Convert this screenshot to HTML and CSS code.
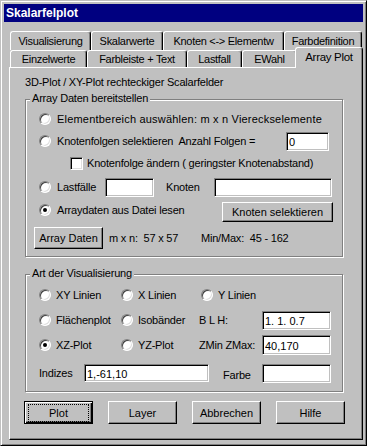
FILE: index.html
```html
<!DOCTYPE html>
<html lang="de">
  <head>
    <meta charset="UTF-8" />
    <title>Skalarfelplot</title>
    <link rel="stylesheet" href="styles.css">
  </head>
  <body>
    <div class="window">
      <div class="titlebar">Skalarfelplot</div>
      <div class="dialog">
        <div class="tabs">
          <div class="tabrow back">
            <div class="tab w-vis">Visualisierung</div>
            <div class="tab w-skal">Skalarwerte</div>
            <div class="tab w-knot">Knoten &lt;-&gt; Elementw</div>
            <div class="tab w-farb">Farbdefinition</div>
          </div>
          <div class="tabrow front">
            <div class="tab w-einz">Einzelwerte</div>
            <div class="tab w-leiste">Farbleiste + Text</div>
            <div class="tab w-last">Lastfall</div>
            <div class="tab w-ewahl">EWahl</div>
            <div class="tab active">Array Plot</div>
          </div>
        </div>

        <div class="panel">
          <p class="intro">3D-Plot / XY-Plot rechteckiger Scalarfelder</p>

          <div class="group g1">
            <span class="legend">Array Daten bereitstellen</span>
            <div class="row">
              <span class="radio"></span><span class="wide">Elementbereich auswählen: m x n Viereckselemente</span>
            </div>
            <div class="row">
              <span class="radio"></span><span>Knotenfolgen selektieren&nbsp; Anzahl Folgen =</span>
              <input class="field f-folgen" type="text" value="0">
            </div>
            <div class="row">
              <span class="check"></span><span>Knotenfolge ändern ( geringster Knotenabstand)</span>
            </div>
            <div class="row r4">
              <span class="radio"></span><span class="lbl-last">Lastfälle</span>
              <input class="field f-last" type="text" value="">
              <span class="lbl-knoten">Knoten</span>
              <input class="field f-knoten" type="text" value="">
            </div>
            <div class="row r5">
              <span class="radio on"></span><span>Arraydaten aus Datei lesen</span>
              <button class="btn b-knoten">Knoten selektieren</button>
            </div>
            <div class="row r6">
              <button class="btn b-array">Array Daten</button>
              <span class="lbl-mxn">m x n:&nbsp; 57 x 57</span>
              <span>Min/Max:&nbsp; 45 - 162</span>
            </div>
          </div>

          <div class="group g2">
            <span class="legend">Art der Visualisierung</span>
            <div class="grid">
              <div class="opt"><span class="radio"></span>XY Linien</div>
              <div class="opt"><span class="radio"></span>X Linien</div>
              <div class="opt shift"><span class="radio"></span>Y Linien</div>
              <div></div>

              <div class="opt"><span class="radio"></span>Flächenplot</div>
              <div class="opt"><span class="radio"></span>Isobänder</div>
              <div class="opt">B L H:</div>
              <input class="field f-blh" type="text" value="1. 1. 0.7">

              <div class="opt"><span class="radio on"></span>XZ-Plot</div>
              <div class="opt"><span class="radio"></span>YZ-Plot</div>
              <div class="opt">ZMin ZMax:</div>
              <input class="field f-z" type="text" value="40,170">
            </div>
            <div class="row r-ind">
              <span class="lbl-ind">Indizes</span>
              <input class="field f-ind" type="text" value="1,-61,10">
              <span class="lbl-farbe">Farbe</span>
              <input class="field f-farbe" type="text" value="">
            </div>
          </div>

          <div class="buttons">
            <button class="btn default"><span>Plot</span></button>
            <button class="btn">Layer</button>
            <button class="btn">Abbrechen</button>
            <button class="btn">Hilfe</button>
          </div>
        </div>
      </div>
    </div>
  </body>
</html>
```

FILE: styles.css
```css
* {
  margin: 0;
  padding: 0;
  box-sizing: border-box;
}

html, body {
  background: #c0c0c0;
}

body {
  font-family: "Liberation Sans", Arial, sans-serif;
  font-size: 11px;
  letter-spacing: -0.2px;
  color: #000;
}

.window {
  width: 367px;
  height: 446px;
  border: 1px solid;
  border-color: #c0c0c0 #000 #000 #c0c0c0;
  box-shadow: inset 1px 1px #fff, inset -1px -1px #808080;
  padding: 3px;
}

.titlebar {
  height: 18px;
  line-height: 18px;
  background: #000080;
  color: #fff;
  font-size: 12px;
  font-weight: bold;
  letter-spacing: 0;
  padding-left: 2px;
}

.dialog {
  padding: 9px 0 0 5px;
}

/* tabs */
.tabs {
  margin-left: 1px;
}

.tabrow {
  display: flex;
}

.tabrow.back {
  height: 19px;
}

.tabrow.front {
  height: 17px;
}

.tab {
  height: 100%;
  border: 1px solid;
  border-bottom: none;
  border-color: #fff #000 #000 #fff;
  box-shadow: inset -1px 0 #808080;
  border-radius: 3px 3px 0 0;
  display: flex;
  align-items: center;
  justify-content: center;
  letter-spacing: -0.3px;
  background: #c0c0c0;
}

.w-vis { width: 81px; }
.w-skal { width: 72px; }
.w-knot { width: 121px; }
.w-farb { width: 78px; }
.w-einz { width: 77px; }
.w-leiste { width: 100px; }
.w-last { width: 55px; }
.w-ewahl { width: 55px; }

.tab.active {
  position: relative;
  z-index: 1;
  width: 68px;
  height: 21px;
  margin: -3px -2px 0 -2px;
  padding-bottom: 2px;
  font-size: 11.5px;
}

/* panel */
.panel {
  height: 373px;
  border: 1px solid;
  border-color: #fff #000 #000 #fff;
  box-shadow: inset -1px -1px #808080;
  padding: 8px 0 0 15px;
}

.intro {
  line-height: 13px;
}

.group {
  position: relative;
  width: 318px;
  border: 1px solid #808080;
  box-shadow: inset 1px 1px #fff, 1px 1px #fff;
}

.legend {
  position: absolute;
  top: -8px;
  left: 4px;
  padding: 0 2px;
  line-height: 13px;
  background: #c0c0c0;
}

.g1 {
  margin-top: 10px;
  padding: 8px 0 7px 13px;
}

.g2 {
  margin-top: 17px;
  padding: 9px 0 7px 13px;
}

.row {
  display: flex;
  align-items: center;
  height: 22px;
}

.wide {
  letter-spacing: 0.2px;
}

.r4 { margin-top: 2px; }
.r5 { margin-top: 1px; }
.r6 { margin-top: 6px; }

/* controls */
.radio {
  position: relative;
  flex: none;
  width: 12px;
  height: 12px;
  margin-right: 6px;
  border-radius: 50%;
  background: #fff;
  border: 1px solid;
  border-color: #808080 #fff #fff #808080;
  box-shadow: inset 1px 1px #404040, inset -1px -1px #dfdfdf;
}

.radio.on::after {
  content: "";
  position: absolute;
  left: 3px;
  top: 3px;
  width: 4px;
  height: 4px;
  border-radius: 50%;
  background: #000;
}

.check {
  flex: none;
  width: 13px;
  height: 13px;
  margin: 0 4px 0 31px;
  background: #fff;
  border: 1px solid;
  border-color: #808080 #fff #fff #808080;
  box-shadow: inset 1px 1px #000, inset -1px -1px #dfdfdf;
}

.field {
  height: 19px;
  background: #fff;
  border: 1px solid;
  border-color: #808080 #fff #fff #808080;
  box-shadow: inset 1px 1px #000, inset -1px -1px #c0c0c0;
  padding: 1px 2px 0 2px;
  font: inherit;
  letter-spacing: 0;
  color: #000;
  outline: none;
}

.btn {
  width: 69px;
  height: 23px;
  padding: 0;
  background: #c0c0c0;
  border: 1px solid;
  border-color: #fff #000 #000 #fff;
  box-shadow: inset -1px -1px #808080;
  font: inherit;
  letter-spacing: 0;
  color: #000;
}

.btn.default {
  border-color: #000;
  box-shadow: inset 1px 1px #fff, inset -1px -1px #000, inset -2px -2px #808080;
}

.btn.default span {
  display: block;
  height: 18px;
  line-height: 16px;
  margin: 0 3px;
  border: 1px dotted #000;
}

/* group 1 details */
.f-folgen {
  width: 43px;
  margin: 0 13px 0 auto;
}

.lbl-last {
  width: 48px;
}

.f-last {
  width: 49px;
}

.lbl-knoten {
  width: 48px;
  margin-left: 12px;
}

.f-knoten {
  width: 118px;
}

.b-knoten {
  width: 111px;
  height: 20px;
  margin: 3px 9px 0 auto;
}

.b-array {
  height: 22px;
  margin-left: -5px;
  margin-right: 6px;
}

.lbl-mxn {
  width: 92px;
}

/* group 2 details */
.grid {
  display: grid;
  grid-template-columns: 82px 78px 63px 69px;
  grid-auto-rows: 22px;
  row-gap: 3px;
  align-items: center;
}

.opt {
  display: flex;
  align-items: center;
}

.grid .radio {
  margin-right: 5px;
}

.opt.shift {
  margin-left: 2px;
}

.f-blh {
  width: 69px;
  height: 19px;
}

.f-z {
  width: 69px;
  height: 20px;
}

.r-ind {
  margin-top: 6px;
}

.lbl-ind {
  width: 45px;
}

.f-ind {
  width: 125px;
  height: 18px;
}

.lbl-farbe {
  width: 39px;
  margin-left: 14px;
  padding-top: 4px;
}

.f-farbe {
  width: 69px;
}

.buttons {
  display: flex;
  gap: 15px;
  margin: 9px 0 0 -1px;
}
```
